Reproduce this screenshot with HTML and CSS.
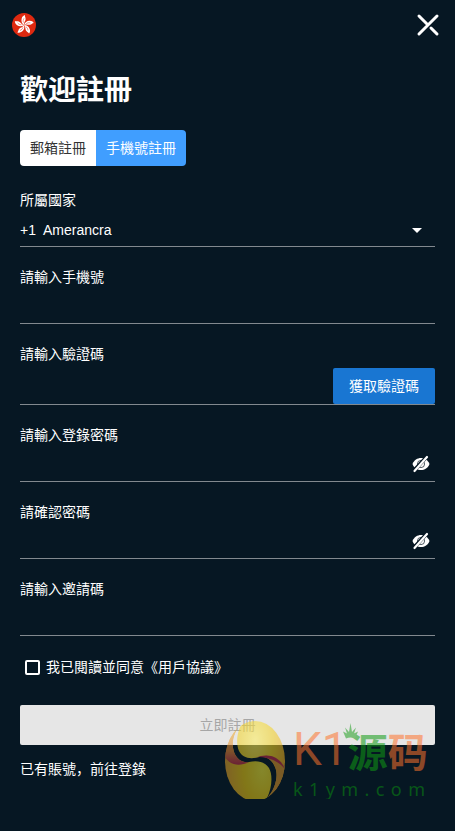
FILE: index.html
```html
<!DOCTYPE html>
<html lang="zh-CN">
<head>
    <meta charset="UTF-8">
    <meta name="viewport" content="width=device-width, initial-scale=1.0">
    <title>歡迎註冊</title>
    <link rel="stylesheet" href="styles.css">
</head>
<body>
    <header class="header">
        <button type="button" class="icon-btn" aria-label="語言">
            <svg width="24" height="24" viewBox="0 0 24 24">
                <defs>
                    <g id="petal">
                        <path d="M12 12C9.800 10.500 9 8 9.700 5.500C10.200 3.600 11.500 2.500 13 2.100C12.600 3.400 13.800 4.400 13.600 6.400C13.400 8.300 11.500 9.500 12 12Z" fill="#fff"/>
                        <path d="M11.500 9.500C10.900 8 11.200 6.700 12 5.300" fill="none" stroke="#de2910" stroke-width=".5"/>
                    </g>
                </defs>
                <circle cx="12" cy="12" r="12" fill="#de2910"/>
                <use href="#petal"/>
                <use href="#petal" transform="rotate(72 12 12)"/>
                <use href="#petal" transform="rotate(144 12 12)"/>
                <use href="#petal" transform="rotate(216 12 12)"/>
                <use href="#petal" transform="rotate(288 12 12)"/>
            </svg>
        </button>
        <button type="button" class="icon-btn" aria-label="關閉">
            <svg width="24" height="24" viewBox="0 0 24 24" fill="none" stroke="#fff" stroke-width="3" stroke-linecap="round">
                <path d="M21 3L3 21M3 3L11.500 11.500M15 15L21 21"/>
            </svg>
        </button>
    </header>

    <main class="container">
        <h1>歡迎註冊</h1>

        <div class="tabs">
            <button type="button" class="tab">郵箱註冊</button>
            <button type="button" class="tab active">手機號註冊</button>
        </div>

        <form>
            <div class="field">
                <label for="country">所屬國家</label>
                <div class="control">
                    <select id="country">
                        <option>+1&nbsp; Amerancra</option>
                    </select>
                    <svg class="caret" width="10" height="5" viewBox="0 0 10 5"><path d="M0 0H10L5 5Z" fill="#fff"/></svg>
                </div>
            </div>

            <div class="field">
                <label for="phone">請輸入手機號</label>
                <div class="control">
                    <input type="tel" id="phone">
                </div>
            </div>

            <div class="field">
                <label for="code">請輸入驗證碼</label>
                <div class="control with-button">
                    <input type="text" id="code">
                    <button type="button" class="code-btn">獲取驗證碼</button>
                </div>
            </div>

            <div class="field">
                <label for="password">請輸入登錄密碼</label>
                <div class="control">
                    <input type="password" id="password">
                    <button type="button" class="icon-btn eye" aria-label="顯示密碼">
                        <svg width="18" height="18" viewBox="0 0 18 18">
                            <g id="eye-off">
                                <path d="M.5 9C2 5 5.500 3 9 3S16 5 17.500 9C16 13 12.500 15 9 15S2 13 .5 9Z" fill="#fff"/>
                                <circle cx="9" cy="9" r="3.600" fill="none" stroke="#061723" stroke-width=".7"/>
                                <path d="M2 15.500L15 1.500" stroke="#061723" stroke-width="3.800"/>
                                <path d="M2.500 16L15 2" stroke="#fff" stroke-width="2.200" stroke-linecap="round"/>
                            </g>
                        </svg>
                    </button>
                </div>
            </div>

            <div class="field">
                <label for="confirm">請確認密碼</label>
                <div class="control">
                    <input type="password" id="confirm">
                    <button type="button" class="icon-btn eye" aria-label="顯示密碼">
                        <svg width="18" height="18" viewBox="0 0 18 18"><use href="#eye-off"/></svg>
                    </button>
                </div>
            </div>

            <div class="field">
                <label for="invite">請輸入邀請碼</label>
                <div class="control">
                    <input type="text" id="invite">
                </div>
            </div>

            <div class="agree">
                <input type="checkbox" id="agree">
                <label for="agree">我已閱讀並同意《用戶協議》</label>
            </div>

            <div class="actions">
                <button type="submit" class="submit" disabled>立即註冊</button>
                <a href="#login">已有賬號，前往登錄</a>

                <div class="watermark">
                    <svg width="60" height="82" viewBox="0 0 60 82">
                        <defs>
                            <radialGradient id="gold" cx=".38" cy=".25" r=".75">
                                <stop offset="0" stop-color="#fff05a"/>
                                <stop offset=".5" stop-color="#f5d21e"/>
                                <stop offset="1" stop-color="#eba01e"/>
                            </radialGradient>
                            <radialGradient id="lobe" cx=".8" cy=".6" r=".8">
                                <stop offset="0" stop-color="#f0e632"/>
                                <stop offset=".5" stop-color="#ebc80f"/>
                                <stop offset="1" stop-color="#e6a028"/>
                            </radialGradient>
                            <linearGradient id="rim" x1="0" y1="0" x2="0" y2="1">
                                <stop offset="0" stop-color="#f5c828"/>
                                <stop offset=".7" stop-color="#e68232"/>
                                <stop offset="1" stop-color="#be2846"/>
                            </linearGradient>
                            <clipPath id="egg">
                                <ellipse cx="30" cy="40" rx="30" ry="40"/>
                            </clipPath>
                        </defs>
                        <g clip-path="url(#egg)">
                            <!-- upper lobe -->
                            <path d="M18 0C13 8 10 21 14 30C17 36 24 39 34 36C42 35 47 39 50 46C54 55 50 69 42 77L60 70V0Z" fill="url(#gold)"/>
                            <path d="M34 36C46 32 56 38 60 46V60L42 77C50 69 54 55 50 46C47 39 42 35 34 36Z" fill="#dc9628"/>
                            <path d="M30 37C44 31 55 36 60 48C53 40 46 37 34 36Z" fill="#be2846"/>
                            <!-- lower lobe -->
                            <path d="M18 0C8 11 6 22 9 31C12 39 18 42 24 41C33 39 40 41 44 47C48 54 47 67 42 77L38 82H0V0Z" fill="url(#lobe)"/>
                            <path d="M18 0C8 11 6 22 9 31C12 39 18 42 24 41C14 46 5 44 0 36V0Z" fill="url(#rim)"/>
                        </g>
                    </svg>
                    <div class="brand">
                        <div class="brand-name">
                            <span class="latin">K1</span>
                            <span class="green">源</span>
                            <span>码</span>
                            <svg class="crown" width="15" height="16" viewBox="0 0 15 16"><path d="M3 15.500L0 8.500L4 10.500L2 4.500L6 9L7.500 0L9 9L13 4.500L11 10.500L15 8.500L12 15.500Q7.500 13.500 3 15.500Z" fill="#1ea01e"/></svg>
                        </div>
                        <div class="brand-url">
                            <span>k</span><span>1</span><span>y</span><span>m</span><span>.</span><span>c</span><span>o</span><span>m</span>
                        </div>
                    </div>
                </div>
            </div>
        </form>
    </main>
</body>
</html>
```
FILE: styles.css
```css
* {
    box-sizing: border-box;
}

body {
    margin: 0;
    background: #061723;
    color: #fff;
    font-family: "Liberation Sans", "Noto Sans CJK SC", sans-serif;
    font-size: 14px;
    line-height: 20px;
}

button,
input,
select {
    font: inherit;
    color: inherit;
    border: none;
    background: none;
    padding: 0;
    margin: 0;
    outline: none;
}

button {
    cursor: pointer;
}

.header {
    display: flex;
    justify-content: space-between;
    padding: 13px 15px 0 12px;
}

.icon-btn {
    display: flex;
}

.container {
    padding: 34px 20px 20px;
}

h1 {
    margin: 0 0 19px;
    font-size: 28px;
    line-height: 40px;
    font-weight: bold;
}

.tabs {
    display: flex;
    margin-bottom: 24px;
}

.tab {
    height: 36px;
    padding: 0 10px;
    background: #fff;
    color: #333;
    border-radius: 4px 0 0 4px;
}

.tab.active {
    background: #409eff;
    color: #fff;
    border-radius: 0 4px 4px 0;
}

.field {
    margin-bottom: 20px;
}

.field label {
    display: block;
}

.control {
    display: flex;
    align-items: center;
    height: 37px;
    border-bottom: 1px solid #82898f;
}

.control input,
.control select {
    flex: 1;
    min-width: 0;
    height: 36px;
    appearance: none;
}

.control select {
    padding-top: 4px;
}

.control option {
    color: #333;
}

.caret {
    margin: 4px 13px 0 0;
    pointer-events: none;
}

.with-button {
    height: 41px;
    align-items: flex-end;
}

.code-btn {
    height: 36px;
    padding: 0 16px;
    background: #1976d2;
    border-radius: 2px;
}

.eye {
    margin: 2px 5px 0 0;
}

.agree {
    display: flex;
    align-items: center;
    gap: 6px;
    padding: 1px 0 0 5px;
    margin-bottom: 28px;
}

.agree input {
    appearance: none;
    width: 15px;
    height: 15px;
    border: 2px solid #fff;
    border-radius: 2px;
}

.actions {
    position: relative;
}

.submit {
    display: block;
    width: 100%;
    height: 40px;
    margin-bottom: 14px;
    background: #e6e6e6;
    color: #a6a6a6;
    border-radius: 2px;
}

.actions a {
    color: #fff;
    text-decoration: none;
}

/* brand mark lying over the bottom of the form */
.watermark {
    position: absolute;
    top: 16px;
    right: 10px;
    display: flex;
    gap: 8px;
    opacity: .54;
    pointer-events: none;
}

.brand {
    width: 132px;
    padding-top: 6px;
}

.brand-name {
    position: relative;
    display: flex;
    justify-content: space-between;
    font-family: "Liberation Sans", "Noto Sans CJK SC", sans-serif;
    font-size: 40px;
    line-height: 52px;
    font-weight: bold;
    color: #ff732c;
}

.brand-name .latin {
    font-family: Roboto, sans-serif;
    font-size: 46px;
    line-height: 44px;
    font-weight: normal;
}

.green {
    color: #109b14;
}

.crown {
    position: absolute;
    left: 50px;
    top: -4px;
}

.brand-url {
    display: flex;
    justify-content: space-between;
    font-family: "Noto Sans", sans-serif;
    font-size: 18px;
    color: #0a8c10;
}
```
